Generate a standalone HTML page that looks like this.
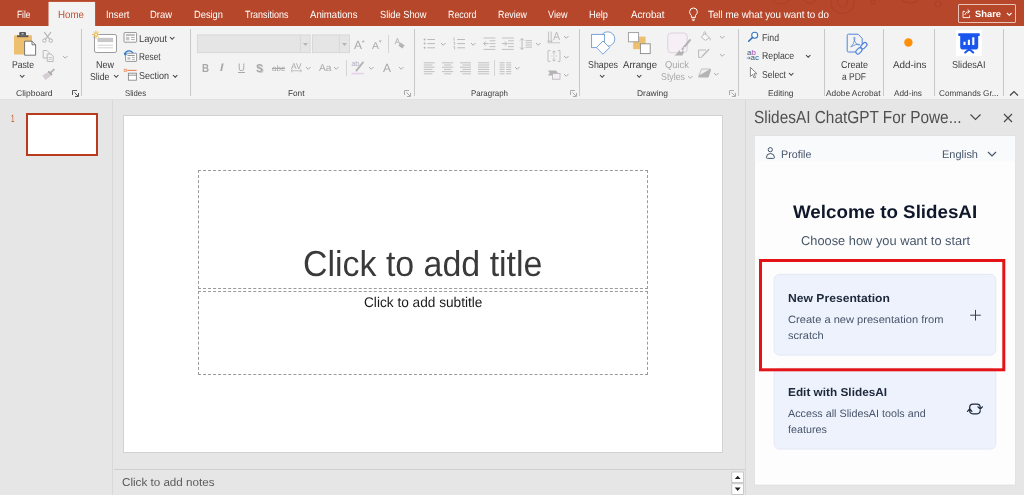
<!DOCTYPE html>
<html><head><meta charset="utf-8"><title>PowerPoint</title>
<style>
html,body{margin:0;padding:0;}
body{width:1024px;height:495px;overflow:hidden;position:relative;background:#e6e6e6;font-family:"Liberation Sans",sans-serif;}
.a{position:absolute;display:block;box-sizing:border-box;}
#txt{position:absolute;left:0;top:0;width:1024px;height:495px;will-change:transform;}
.t{position:absolute;white-space:nowrap;transform-origin:0 50%;text-rendering:geometricPrecision;}
</style></head><body>
<div class="a" style="left:0px;top:0px;width:1024px;height:26px;background:#b7472a;"></div>
<svg class="a" style="left:760px;top:0px" width="264" height="26" viewBox="760 0 264 26" fill="none"><g stroke="#a9412a" stroke-width="1.1" opacity="0.85"><circle cx="842.5" cy="2" r="11.5"/><circle cx="842.5" cy="2" r="5"/><circle cx="781" cy="-6" r="10"/><circle cx="810" cy="-2" r="5.5"/><circle cx="910" cy="-10" r="13"/><circle cx="938" cy="4" r="3"/><circle cx="873" cy="2" r="2"/></g></svg>
<div class="a" style="left:0px;top:26px;width:1024px;height:73px;background:#f3f3f3;"></div>
<div class="a" style="left:0px;top:99px;width:1024px;height:1px;background:#e1e1e1;"></div>
<svg class="a" style="left:47px;top:1px" width="50" height="26" viewBox="47 1 50 26" fill="none"><rect x="48.5" y="1.9" width="46.6" height="25" fill="#f3f3f3"/></svg>
<div class="a" style="left:958px;top:4px;width:58px;height:19px;border:1px solid #e9c3b8;border-radius:1px;"></div>
<svg class="a" style="left:1005.75px;top:12.35px" width="6.5" height="4.3" viewBox="-1 -1 6.5 4.3" fill="none"><path d="M0 0 L2.25 2.3 L4.5 0" stroke="#fff" stroke-width="1.1"/></svg>
<div class="a" style="left:81px;top:29px;width:1px;height:67px;background:#c8c8c8;"></div>
<div class="a" style="left:190px;top:29px;width:1px;height:67px;background:#c8c8c8;"></div>
<div class="a" style="left:414px;top:29px;width:1px;height:67px;background:#c8c8c8;"></div>
<div class="a" style="left:579px;top:29px;width:1px;height:67px;background:#c8c8c8;"></div>
<div class="a" style="left:738px;top:29px;width:1px;height:67px;background:#c8c8c8;"></div>
<div class="a" style="left:824px;top:29px;width:1px;height:67px;background:#c8c8c8;"></div>
<div class="a" style="left:883px;top:29px;width:1px;height:67px;background:#c8c8c8;"></div>
<div class="a" style="left:934px;top:29px;width:1px;height:67px;background:#c8c8c8;"></div>
<div class="a" style="left:1003px;top:29px;width:1px;height:67px;background:#c8c8c8;"></div>
<div class="a" style="left:388px;top:35px;width:1px;height:18px;background:#d4d4d4;"></div>
<div class="a" style="left:346px;top:60px;width:1px;height:16px;background:#d4d4d4;"></div>
<div class="a" style="left:494px;top:60px;width:1px;height:16px;background:#d4d4d4;"></div>
<svg class="a" style="left:72px;top:89.5px" width="7" height="7" viewBox="0 0 7 7" fill="none"><path d="M0.5 5 V0.5 H5" stroke="#555" stroke-width="1"/><path d="M2.5 2.5 L6 6 M6.5 3 V6.5 H3" stroke="#555" stroke-width="1"/></svg>
<svg class="a" style="left:404px;top:89.5px" width="7" height="7" viewBox="0 0 7 7" fill="none"><path d="M0.5 5 V0.5 H5" stroke="#aaa" stroke-width="1"/><path d="M2.5 2.5 L6 6 M6.5 3 V6.5 H3" stroke="#aaa" stroke-width="1"/></svg>
<svg class="a" style="left:570px;top:89.5px" width="7" height="7" viewBox="0 0 7 7" fill="none"><path d="M0.5 5 V0.5 H5" stroke="#aaa" stroke-width="1"/><path d="M2.5 2.5 L6 6 M6.5 3 V6.5 H3" stroke="#aaa" stroke-width="1"/></svg>
<svg class="a" style="left:729px;top:89.5px" width="7" height="7" viewBox="0 0 7 7" fill="none"><path d="M0.5 5 V0.5 H5" stroke="#aaa" stroke-width="1"/><path d="M2.5 2.5 L6 6 M6.5 3 V6.5 H3" stroke="#aaa" stroke-width="1"/></svg>
<svg class="a" style="left:1009px;top:90px;" width="10" height="7" viewBox="0 0 10 7" fill="none"><path d="M1 5.5 L5 1.5 L9 5.5" stroke="#444" stroke-width="1.2"/></svg>
<svg class="a" style="left:18.80px;top:74.35px" width="6.4" height="4.3" viewBox="-1 -1 6.4 4.3" fill="none"><path d="M0 0 L2.2 2.3 L4.4 0" stroke="#3d3d3d" stroke-width="1.05"/></svg>
<svg class="a" style="left:61.75px;top:54.85px" width="6.5" height="4.3" viewBox="-1 -1 6.5 4.3" fill="none"><path d="M0 0 L2.25 2.3 L4.5 0" stroke="#adadad" stroke-width="1.0"/></svg>
<svg class="a" style="left:112.80px;top:74.45px" width="6.4" height="4.3" viewBox="-1 -1 6.4 4.3" fill="none"><path d="M0 0 L2.2 2.3 L4.4 0" stroke="#3d3d3d" stroke-width="1.05"/></svg>
<svg class="a" style="left:168.80px;top:36.35px" width="6.4" height="4.3" viewBox="-1 -1 6.4 4.3" fill="none"><path d="M0 0 L2.2 2.3 L4.4 0" stroke="#3d3d3d" stroke-width="1.05"/></svg>
<svg class="a" style="left:171.80px;top:73.85px" width="6.4" height="4.3" viewBox="-1 -1 6.4 4.3" fill="none"><path d="M0 0 L2.2 2.3 L4.4 0" stroke="#3d3d3d" stroke-width="1.05"/></svg>
<svg class="a" style="left:196px;top:33px" width="155" height="21" viewBox="196 33 155 21" fill="none"><rect x="197.3" y="34.9" width="112.8" height="17.8" fill="#e5e5e5" stroke="#d4d4d4" stroke-width="0.8"/><path d="M300.4 34.9 V52.7" stroke="#d4d4d4" stroke-width="0.8"/><rect x="312.4" y="34.9" width="37" height="17.8" fill="#e5e5e5" stroke="#d4d4d4" stroke-width="0.8"/><path d="M339.4 34.9 V52.7" stroke="#d4d4d4" stroke-width="0.8"/></svg>
<svg class="a" style="left:303px;top:43px;" width="5" height="3" viewBox="0 0 5 3" fill="none"><path d="M0 0 H5 L2.5 3 Z" fill="#b5b5b5"/></svg>
<svg class="a" style="left:342px;top:43px;" width="5" height="3" viewBox="0 0 5 3" fill="none"><path d="M0 0 H5 L2.5 3 Z" fill="#b5b5b5"/></svg>
<svg class="a" style="left:304.75px;top:65.85px" width="6.5" height="4.3" viewBox="-1 -1 6.5 4.3" fill="none"><path d="M0 0 L2.25 2.3 L4.5 0" stroke="#adadad" stroke-width="1.0"/></svg>
<svg class="a" style="left:333.25px;top:65.85px" width="6.5" height="4.3" viewBox="-1 -1 6.5 4.3" fill="none"><path d="M0 0 L2.25 2.3 L4.5 0" stroke="#adadad" stroke-width="1.0"/></svg>
<svg class="a" style="left:367.75px;top:65.85px" width="6.5" height="4.3" viewBox="-1 -1 6.5 4.3" fill="none"><path d="M0 0 L2.25 2.3 L4.5 0" stroke="#adadad" stroke-width="1.0"/></svg>
<svg class="a" style="left:397.75px;top:65.85px" width="6.5" height="4.3" viewBox="-1 -1 6.5 4.3" fill="none"><path d="M0 0 L2.25 2.3 L4.5 0" stroke="#adadad" stroke-width="1.0"/></svg>
<svg class="a" style="left:439.75px;top:41.85px" width="6.5" height="4.3" viewBox="-1 -1 6.5 4.3" fill="none"><path d="M0 0 L2.25 2.3 L4.5 0" stroke="#adadad" stroke-width="1.0"/></svg>
<svg class="a" style="left:469.75px;top:41.85px" width="6.5" height="4.3" viewBox="-1 -1 6.5 4.3" fill="none"><path d="M0 0 L2.25 2.3 L4.5 0" stroke="#adadad" stroke-width="1.0"/></svg>
<svg class="a" style="left:534.75px;top:41.85px" width="6.5" height="4.3" viewBox="-1 -1 6.5 4.3" fill="none"><path d="M0 0 L2.25 2.3 L4.5 0" stroke="#adadad" stroke-width="1.0"/></svg>
<svg class="a" style="left:562.75px;top:35.35px" width="6.5" height="4.3" viewBox="-1 -1 6.5 4.3" fill="none"><path d="M0 0 L2.25 2.3 L4.5 0" stroke="#adadad" stroke-width="1.0"/></svg>
<svg class="a" style="left:562.75px;top:54.85px" width="6.5" height="4.3" viewBox="-1 -1 6.5 4.3" fill="none"><path d="M0 0 L2.25 2.3 L4.5 0" stroke="#adadad" stroke-width="1.0"/></svg>
<svg class="a" style="left:562.75px;top:72.85px" width="6.5" height="4.3" viewBox="-1 -1 6.5 4.3" fill="none"><path d="M0 0 L2.25 2.3 L4.5 0" stroke="#adadad" stroke-width="1.0"/></svg>
<svg class="a" style="left:513.75px;top:65.85px" width="6.5" height="4.3" viewBox="-1 -1 6.5 4.3" fill="none"><path d="M0 0 L2.25 2.3 L4.5 0" stroke="#adadad" stroke-width="1.0"/></svg>
<svg class="a" style="left:599.30px;top:74.35px" width="6.4" height="4.3" viewBox="-1 -1 6.4 4.3" fill="none"><path d="M0 0 L2.2 2.3 L4.4 0" stroke="#3d3d3d" stroke-width="1.05"/></svg>
<svg class="a" style="left:635.80px;top:74.35px" width="6.4" height="4.3" viewBox="-1 -1 6.4 4.3" fill="none"><path d="M0 0 L2.2 2.3 L4.4 0" stroke="#3d3d3d" stroke-width="1.05"/></svg>
<svg class="a" style="left:686.75px;top:74.85px" width="6.5" height="4.3" viewBox="-1 -1 6.5 4.3" fill="none"><path d="M0 0 L2.25 2.3 L4.5 0" stroke="#adadad" stroke-width="1.0"/></svg>
<svg class="a" style="left:718.75px;top:35.35px" width="6.5" height="4.3" viewBox="-1 -1 6.5 4.3" fill="none"><path d="M0 0 L2.25 2.3 L4.5 0" stroke="#adadad" stroke-width="1.0"/></svg>
<svg class="a" style="left:718.75px;top:53.35px" width="6.5" height="4.3" viewBox="-1 -1 6.5 4.3" fill="none"><path d="M0 0 L2.25 2.3 L4.5 0" stroke="#adadad" stroke-width="1.0"/></svg>
<svg class="a" style="left:712.75px;top:71.85px" width="6.5" height="4.3" viewBox="-1 -1 6.5 4.3" fill="none"><path d="M0 0 L2.25 2.3 L4.5 0" stroke="#adadad" stroke-width="1.0"/></svg>
<svg class="a" style="left:804.80px;top:53.85px" width="6.4" height="4.3" viewBox="-1 -1 6.4 4.3" fill="none"><path d="M0 0 L2.2 2.3 L4.4 0" stroke="#3d3d3d" stroke-width="1.05"/></svg>
<svg class="a" style="left:787.80px;top:72.35px" width="6.4" height="4.3" viewBox="-1 -1 6.4 4.3" fill="none"><path d="M0 0 L2.2 2.3 L4.4 0" stroke="#3d3d3d" stroke-width="1.05"/></svg>
<svg class="a" style="left:903px;top:37px" width="11" height="11" viewBox="903 37 11 11" fill="none"><circle cx="908.4" cy="42.45" r="4.2" fill="#ff8f06"/></svg>
<div class="a" style="left:112px;top:100px;width:1px;height:395px;background:#d9d9d9;"></div>
<div class="a" style="left:26px;top:113px;width:72px;height:43px;background:#fff;border:2px solid #b83b1e;"></div>
<div class="a" style="left:123px;top:115px;width:600px;height:338px;background:#fff;border:1px solid #d2d2d2;"></div>
<div class="a" style="left:198px;top:170px;width:450px;height:119px;border:1px dashed #9a9a9a;"></div>
<div class="a" style="left:198px;top:290.5px;width:450px;height:84px;border:1px dashed #9a9a9a;"></div>
<div class="a" style="left:114px;top:469px;width:632px;height:1px;background:#cfcfcf;"></div>
<svg class="a" style="left:730px;top:470px" width="16" height="25" viewBox="730 470 16 25" fill="none"><rect x="731.8" y="472" width="11.8" height="10.6" fill="#fff" stroke="#bdbdbd" stroke-width="0.8"/><rect x="731.8" y="483.8" width="11.8" height="10.8" fill="#fff" stroke="#bdbdbd" stroke-width="0.8"/><path d="M734.8 479 L737.7 475.7 L740.6 479 Z" fill="#222"/><path d="M734.8 487.6 L737.7 490.9 L740.6 487.6 Z" fill="#222"/></svg>
<div class="a" style="left:745px;top:100px;width:1px;height:395px;background:#d8d8d8;"></div>
<svg class="a" style="left:969px;top:113px;" width="13" height="8" viewBox="0 0 13 8" fill="none"><path d="M1.5 1.5 L6.5 6.5 L11.5 1.5" stroke="#444" stroke-width="1.1"/></svg>
<svg class="a" style="left:1002.5px;top:112.5px;" width="10" height="10" viewBox="0 0 10 10" fill="none"><path d="M1 1 L9 9 M9 1 L1 9" stroke="#444" stroke-width="1.1"/></svg>
<svg class="a" style="left:753px;top:134px" width="264" height="353" viewBox="753 134 264 353" fill="none"><rect x="754.4" y="135.7" width="261.1" height="349.3" fill="#fdfdfe" stroke="#dcdcdc" stroke-width="0.7"/><rect x="754.8" y="136.1" width="260.3" height="25.2" fill="#f8fafc"/></svg>
<svg class="a" style="left:986.5px;top:151px;" width="10" height="6" viewBox="0 0 10 6" fill="none"><path d="M1 1 L5 5 L9 1" stroke="#475569" stroke-width="1.2"/></svg>
<svg class="a" style="left:772px;top:272px" width="226" height="180" viewBox="772 272 226 180" fill="none"><rect x="774.1" y="274.3" width="221.7" height="80.8" rx="5.5" fill="#eef2fd" stroke="#e1e7f2" stroke-width="0.9"/><rect x="774.1" y="368.3" width="221.7" height="80.8" rx="5.5" fill="#eef2fd" stroke="#e1e7f2" stroke-width="0.9"/></svg>
<svg class="a" style="left:969px;top:309px" width="13" height="13" viewBox="969 309 13 13" fill="none"><path d="M975.5 309.9 V320.5 M970.2 315.2 H980.8" stroke="#334155" stroke-width="1"/></svg>
<svg class="a" style="left:757px;top:257px" width="251" height="117" viewBox="757 257 251 117" fill="none"><rect x="760.5" y="260.5" width="243.3" height="109.3" stroke="#e41318" stroke-width="3"/></svg>
<svg class="a" style="left:12px;top:30px" width="26" height="28" viewBox="12 30 26 28" fill="none">
<rect x="14" y="35.2" width="18" height="19.3" rx="0.8" fill="#edc06f"/>
<path d="M19.2 35.6 V33 Q19.2 32 20.2 32 H25 Q26 32 26 33 V35.6 Z" fill="#5a5a5a"/><rect x="21.6" y="33.2" width="2" height="1.2" fill="#d8d8d8"/>
<rect x="17" y="35.3" width="11.4" height="1.9" fill="#5a5a5a"/>
<path d="M24.6 41.2 H32 L35.6 44.8 V55.2 H24.6 Z" fill="#fff" stroke="#6a6a6a" stroke-width="0.9"/>
<path d="M32 41.2 V44.8 H35.6" stroke="#6a6a6a" stroke-width="0.9" fill="none"/>
</svg>
<svg class="a" style="left:41px;top:31px" width="14" height="13" viewBox="41 31 14 13" fill="none">
<path d="M44.2 32.2 L50 39.6 M51 32.2 L45.2 39.6" stroke="#b4b4b4" stroke-width="1.1"/>
<circle cx="44.4" cy="40.6" r="1.7" stroke="#b4b4b4" stroke-width="1"/>
<circle cx="50.8" cy="40.6" r="1.7" stroke="#b4b4b4" stroke-width="1"/>
</svg>
<svg class="a" style="left:41px;top:49px" width="14" height="14" viewBox="41 49 14 14" fill="none">
<path d="M43.2 50.5 H47 L49 52.5 V58 H43.2 Z" stroke="#b4b4b4" stroke-width="0.9" fill="#f3f3f3"/>
<path d="M47.2 54 H51 L53.2 56.2 V61.5 H47.2 Z" stroke="#b4b4b4" stroke-width="0.9" fill="#f3f3f3"/>
<path d="M48.6 57.5 H51.8 M48.6 59.3 H51.8" stroke="#b4b4b4" stroke-width="0.7"/>
</svg>
<svg class="a" style="left:41px;top:68px" width="15" height="13" viewBox="41 68 15 13" fill="none">
<path d="M47.6 72.2 L51.2 75.8 L45.4 80 L42.4 75.6 Z" fill="#d4cdd4"/>
<path d="M48.4 71.4 L52 75" stroke="#a0a0a0" stroke-width="1.7"/>
<path d="M53.8 69.6 L51.2 72.2" stroke="#b4b4b4" stroke-width="1.9" stroke-linecap="round"/>
</svg>
<svg class="a" style="left:90px;top:29px" width="29" height="25" viewBox="90 29 29 25" fill="none">
<rect x="94.5" y="34.5" width="22" height="18" rx="1.6" fill="#fff" stroke="#9c9c9c" stroke-width="1"/>
<rect x="97.5" y="37.8" width="15.6" height="4.3" fill="#c8c8c8"/>
<path d="M97.5 45.2 H113 M97.5 47.8 H113" stroke="#c8c8c8" stroke-width="0.8"/>
<g stroke="#e9b23e" stroke-width="0.9"><path d="M96 30.6 V38.6 M92 34.6 H100 M93.2 31.8 L98.8 37.4 M98.8 31.8 L93.2 37.4"/></g>
<circle cx="96" cy="34.6" r="1.5" fill="#f3f3f3" stroke="#e9b23e" stroke-width="0.8"/>
</svg>
<svg class="a" style="left:123px;top:31px" width="15" height="13" viewBox="123 31 15 13" fill="none">
<rect x="124" y="32.6" width="12.6" height="9.6" rx="0.6" fill="#fff" stroke="#8a8a8a" stroke-width="0.9"/>
<path d="M125.8 35 H134.8" stroke="#8a8a8a" stroke-width="1.1"/>
<rect x="125.8" y="36.8" width="3.6" height="3.6" fill="#c6c6c6"/>
<path d="M131 37.4 H134.8 M131 39.6 H134.8" stroke="#9a9a9a" stroke-width="0.8"/>
</svg>
<svg class="a" style="left:123px;top:49px" width="15" height="14" viewBox="123 49 15 14" fill="none">
<rect x="125.6" y="53.2" width="11" height="8.2" rx="0.6" fill="#fff" stroke="#8a8a8a" stroke-width="0.9"/>
<path d="M127.4 55.4 H134.8" stroke="#8a8a8a" stroke-width="1"/>
<rect x="127.4" y="57" width="3" height="2.8" fill="#c6c6c6"/>
<path d="M132 57.4 H134.8 M132 59.4 H134.8" stroke="#9a9a9a" stroke-width="0.8"/>
<path d="M124.8 54.6 Q125.4 50.6 129.6 50.9 Q132 51.2 132.8 53" stroke="#2b79d0" stroke-width="1.3" fill="none"/>
<path d="M123.6 52.6 L124.7 55.6 L127.4 54.2 Z" fill="#2b79d0"/>
</svg>
<svg class="a" style="left:123px;top:68px" width="15" height="14" viewBox="123 68 15 14" fill="none">
<rect x="124.2" y="69.2" width="2.4" height="2.4" fill="#fbe3d2" stroke="#e8835a" stroke-width="0.7"/>
<path d="M127.4 70.4 H136.6" stroke="#e8835a" stroke-width="1.1"/>
<rect x="128.4" y="73.2" width="8" height="7" fill="#fff" stroke="#8a8a8a" stroke-width="0.9"/>
<path d="M128.4 75.2 H136.4" stroke="#7a7a7a" stroke-width="0.8"/>
</svg>
<svg class="a" style="left:361px;top:39px" width="5" height="4" viewBox="361 39 5 4" fill="none"><path d="M361.6 42.2 L363.2 40 L364.8 42.2 Z" fill="#b4b4b4"/></svg>
<svg class="a" style="left:378px;top:40px" width="5" height="4" viewBox="378 40 5 4" fill="none"><path d="M378.6 40.6 L380.2 42.8 L381.8 40.6 Z" fill="#b4b4b4"/></svg>
<svg class="a" style="left:393px;top:37px" width="13" height="13" viewBox="393 37 13 13" fill="none">
<path d="M395 44.2 L397.4 38.2 L399.8 44.2 M395.9 42.2 H398.9" stroke="#b4b4b4" stroke-width="0.9"/>
<path d="M400.6 42.4 L404.6 45.6 L402.4 48.6 L398.4 45.4 Z" fill="#b4b4b4"/>
</svg>
<svg class="a" style="left:290px;top:69px" width="13" height="4" viewBox="290 69 13 4" fill="none"><path d="M291 70.8 H301.6 M292.6 69.4 L291 70.8 L292.6 72.2 M300 69.4 L301.6 70.8 L300 72.2" stroke="#b4b4b4" stroke-width="0.8"/></svg>
<svg class="a" style="left:351px;top:60px" width="14" height="16" viewBox="351 60 14 16" fill="none">
<text x="351.4" y="66.2" font-size="7" fill="#b4b4b4" font-family="Liberation Sans, sans-serif">ab</text>
<path d="M363 62.4 L356.4 70.6" stroke="#b4b4b4" stroke-width="1.9" stroke-linecap="round"/>
<path d="M351.4 73.6 H364" stroke="#e6d3ea" stroke-width="1.6"/>
</svg>
<svg class="a" style="left:422px;top:36px" width="15" height="14" viewBox="422 36 15 14" fill="none"><circle cx="424.6" cy="39.5" r="1" fill="#b4b4b4"/><circle cx="424.6" cy="43.6" r="1" fill="#b4b4b4"/><circle cx="424.6" cy="47.8" r="1" fill="#b4b4b4"/><path d="M427.4 39.5 H435" stroke="#b4b4b4" stroke-width="0.9"/><path d="M427.4 43.6 H435" stroke="#b4b4b4" stroke-width="0.9"/><path d="M427.4 47.8 H435" stroke="#b4b4b4" stroke-width="0.9"/></svg>
<svg class="a" style="left:451px;top:36px" width="15" height="14" viewBox="451 36 15 14" fill="none"><path d="M454 37.6 V40.8 M453.4 42.4 H454.6 V45 M453.4 46.6 H454.6 V49.4" stroke="#b4b4b4" stroke-width="0.8"/><path d="M457.2 39.5 H465" stroke="#b4b4b4" stroke-width="0.9"/><path d="M457.2 43.6 H465" stroke="#b4b4b4" stroke-width="0.9"/><path d="M457.2 47.8 H465" stroke="#b4b4b4" stroke-width="0.9"/></svg>
<svg class="a" style="left:482px;top:36px" width="15" height="15" viewBox="482 36 15 15" fill="none"><path d="M483.6 38 H495.4" stroke="#b4b4b4" stroke-width="0.8"/><path d="M483.6 49.4 H495.4" stroke="#b4b4b4" stroke-width="0.8"/><path d="M489.6 40.8 H495.4" stroke="#b4b4b4" stroke-width="0.8"/><path d="M489.6 43.6 H495.4" stroke="#b4b4b4" stroke-width="0.8"/><path d="M489.6 46.6 H495.4" stroke="#b4b4b4" stroke-width="0.8"/><path d="M483.8 43.6 H488.6 M485.8 41.4 L483.6 43.6 L485.8 45.8" stroke="#b4b4b4" stroke-width="0.9"/></svg>
<svg class="a" style="left:500px;top:36px" width="15" height="15" viewBox="500 36 15 15" fill="none"><path d="M502 38 H513.8" stroke="#b4b4b4" stroke-width="0.8"/><path d="M502 49.4 H513.8" stroke="#b4b4b4" stroke-width="0.8"/><path d="M508 40.8 H513.8" stroke="#b4b4b4" stroke-width="0.8"/><path d="M508 43.6 H513.8" stroke="#b4b4b4" stroke-width="0.8"/><path d="M508 46.6 H513.8" stroke="#b4b4b4" stroke-width="0.8"/><path d="M502 43.6 H507 M504.8 41.4 L507 43.6 L504.8 45.8" stroke="#b4b4b4" stroke-width="0.9"/></svg>
<svg class="a" style="left:518px;top:37px" width="15" height="14" viewBox="518 37 15 14" fill="none"><path d="M522 38.6 V49.4 M520 40.6 L522 38.4 L524 40.6 M520 47.4 L522 49.6 L524 47.4" stroke="#b4b4b4" stroke-width="0.9"/><path d="M525.6 40.6 H532" stroke="#b4b4b4" stroke-width="0.8"/><path d="M525.6 42.8 H532" stroke="#b4b4b4" stroke-width="0.8"/><path d="M525.6 45 H532" stroke="#b4b4b4" stroke-width="0.8"/><path d="M525.6 47.2 H532" stroke="#b4b4b4" stroke-width="0.8"/></svg>
<svg class="a" style="left:422px;top:61px" width="14" height="14" viewBox="422 61 14 14" fill="none"><path d="M423.8 62.8 H434.6" stroke="#b4b4b4" stroke-width="0.8"/><path d="M423.8 65 H432.4" stroke="#b4b4b4" stroke-width="0.8"/><path d="M423.8 67.2 H434.6" stroke="#b4b4b4" stroke-width="0.8"/><path d="M423.8 69.4 H432.4" stroke="#b4b4b4" stroke-width="0.8"/><path d="M423.8 71.6 H434.6" stroke="#b4b4b4" stroke-width="0.8"/><path d="M423.8 73.8 H432.4" stroke="#b4b4b4" stroke-width="0.8"/></svg>
<svg class="a" style="left:440px;top:61px" width="14" height="14" viewBox="440 61 14 14" fill="none"><path d="M442 62.8 H453.2" stroke="#b4b4b4" stroke-width="0.8"/><path d="M444 65 H451.2" stroke="#b4b4b4" stroke-width="0.8"/><path d="M442 67.2 H453.2" stroke="#b4b4b4" stroke-width="0.8"/><path d="M444 69.4 H451.2" stroke="#b4b4b4" stroke-width="0.8"/><path d="M442 71.6 H453.2" stroke="#b4b4b4" stroke-width="0.8"/><path d="M444 73.8 H451.2" stroke="#b4b4b4" stroke-width="0.8"/></svg>
<svg class="a" style="left:458px;top:61px" width="14" height="14" viewBox="458 61 14 14" fill="none"><path d="M460 62.8 H471" stroke="#b4b4b4" stroke-width="0.8"/><path d="M462.4 65 H471" stroke="#b4b4b4" stroke-width="0.8"/><path d="M460 67.2 H471" stroke="#b4b4b4" stroke-width="0.8"/><path d="M462.4 69.4 H471" stroke="#b4b4b4" stroke-width="0.8"/><path d="M460 71.6 H471" stroke="#b4b4b4" stroke-width="0.8"/><path d="M462.4 73.8 H471" stroke="#b4b4b4" stroke-width="0.8"/></svg>
<svg class="a" style="left:476px;top:61px" width="14" height="14" viewBox="476 61 14 14" fill="none"><path d="M478 62.8 H489.2" stroke="#b4b4b4" stroke-width="0.8"/><path d="M478 65 H489.2" stroke="#b4b4b4" stroke-width="0.8"/><path d="M478 67.2 H489.2" stroke="#b4b4b4" stroke-width="0.8"/><path d="M478 69.4 H489.2" stroke="#b4b4b4" stroke-width="0.8"/><path d="M478 71.6 H489.2" stroke="#b4b4b4" stroke-width="0.8"/><path d="M478 73.8 H489.2" stroke="#b4b4b4" stroke-width="0.8"/></svg>
<svg class="a" style="left:498px;top:61px" width="14" height="14" viewBox="498 61 14 14" fill="none"><path d="M499.6 62.8 H504.6" stroke="#b4b4b4" stroke-width="0.8"/><path d="M499.6 65 H504.6" stroke="#b4b4b4" stroke-width="0.8"/><path d="M499.6 67.2 H504.6" stroke="#b4b4b4" stroke-width="0.8"/><path d="M499.6 69.4 H504.6" stroke="#b4b4b4" stroke-width="0.8"/><path d="M499.6 71.6 H504.6" stroke="#b4b4b4" stroke-width="0.8"/><path d="M499.6 73.8 H504.6" stroke="#b4b4b4" stroke-width="0.8"/><path d="M506.2 62.8 H511.2" stroke="#b4b4b4" stroke-width="0.8"/><path d="M506.2 65 H511.2" stroke="#b4b4b4" stroke-width="0.8"/><path d="M506.2 67.2 H511.2" stroke="#b4b4b4" stroke-width="0.8"/><path d="M506.2 69.4 H511.2" stroke="#b4b4b4" stroke-width="0.8"/><path d="M506.2 71.6 H511.2" stroke="#b4b4b4" stroke-width="0.8"/><path d="M506.2 73.8 H511.2" stroke="#b4b4b4" stroke-width="0.8"/></svg>
<svg class="a" style="left:546px;top:30px" width="16" height="14" viewBox="546 30 16 14" fill="none"><path d="M548.6 31.6 V42 M551.2 31.6 V42 M547.4 40.6 L548.6 42.2 L549.8 40.6 M550 40.6 L551.2 42.2 L552.4 40.6" stroke="#b4b4b4" stroke-width="0.8"/><path d="M553.6 40 L556.6 32 L559.6 40 M554.8 37.2 H558.4" stroke="#b4b4b4" stroke-width="0.9"/><path d="M547.6 42.8 H560.2" stroke="#b4b4b4" stroke-width="0.7"/></svg>
<svg class="a" style="left:546px;top:49px" width="16" height="14" viewBox="546 49 16 14" fill="none"><path d="M550.4 50.6 H548 V61.4 H550.4 M557.6 50.6 H560 V61.4 H557.6" stroke="#b4b4b4" stroke-width="0.8"/><path d="M554 50.8 V54.6 M552.4 52.4 L554 50.8 L555.6 52.4 M554 61.2 V57.4 M552.4 59.6 L554 61.2 L555.6 59.6" stroke="#b4b4b4" stroke-width="0.8"/><path d="M550.6 56 H557.4" stroke="#e6d3ea" stroke-width="1"/></svg>
<svg class="a" style="left:546px;top:69px" width="16" height="12" viewBox="546 69 16 12" fill="none"><path d="M547.8 70.4 H556 L558 73 L556 75.6 H547.8 L549.8 73 Z" fill="#b4b4b4"/><rect x="552.4" y="73.4" width="7.6" height="5.8" fill="#f5eef6" stroke="#b4b4b4" stroke-width="0.8"/></svg>
<svg class="a" style="left:589px;top:29px" width="28" height="28" viewBox="589 29 28 28" fill="none">
<circle cx="607.6" cy="39" r="7.2" fill="#fff" stroke="#6d9bd3" stroke-width="0.9"/>
<rect x="591.6" y="34.4" width="13" height="13.2" fill="#fff" stroke="#6d9bd3" stroke-width="0.9"/>
<path d="M603 41 L609.6 47.6 L603 54.2 L596.4 47.6 Z" fill="#fff" stroke="#6d9bd3" stroke-width="0.9"/>
</svg>
<svg class="a" style="left:626px;top:30px" width="26" height="26" viewBox="626 30 26 26" fill="none">
<rect x="633.2" y="36.6" width="12.4" height="12.6" fill="#edc06f"/>
<rect x="628.4" y="32.6" width="10.2" height="9.2" fill="#fff" stroke="#9a9a9a" stroke-width="0.9"/>
<rect x="640.4" y="43.8" width="9.8" height="9.8" fill="#fff" stroke="#8a8a8a" stroke-width="0.9"/>
</svg>
<svg class="a" style="left:665px;top:30px" width="27" height="28" viewBox="665 30 27 28" fill="none">
<rect x="667.8" y="33" width="19.4" height="19.8" rx="3.4" fill="#f6f0f6" stroke="#d8d0d8" stroke-width="0.9"/>
<path d="M690 40 L682.6 49" stroke="#b4b4b4" stroke-width="2" stroke-linecap="round"/>
<path d="M681.2 49.2 Q679 49.6 677.4 52.8 Q675.6 55.4 673.6 55.6 H682.4 Q684.2 53 683.6 51 Z" fill="#b4b4b4"/>
<circle cx="681" cy="50.6" r="1.4" fill="#f3f3f3"/><circle cx="684.6" cy="48" r="1" fill="#f3f3f3"/>
</svg>
<svg class="a" style="left:699px;top:30px" width="13" height="12" viewBox="699 30 13 12" fill="none"><path d="M705 33.6 L709.4 37.6 L705.4 40.4 L701.2 37 Z" stroke="#b4b4b4" stroke-width="0.9" fill="#f8f8f8"/><path d="M703.8 35 V32.4 Q704.6 31 705.8 32.4 V34.4" stroke="#b4b4b4" stroke-width="0.8"/><path d="M709.6 37.6 Q710.8 39.4 710 40.4" stroke="#b4b4b4" stroke-width="0.9"/></svg>
<svg class="a" style="left:697px;top:48px" width="15" height="11" viewBox="697 48 15 11" fill="none"><path d="M706 50 H698.6 V57.4 H702" stroke="#b4b4b4" stroke-width="0.9"/><path d="M709.6 49.6 L703 56.6 L701.4 57.6 L702 55.8 L708.6 48.8 Z" fill="#b4b4b4"/></svg>
<svg class="a" style="left:697px;top:67px" width="15" height="12" viewBox="697 67 15 12" fill="none"><path d="M701.6 69 H710.2 L708 75.4 H699 Z" fill="#f4eef4" stroke="#b4b4b4" stroke-width="0.8"/><path d="M699 75.4 V77 H708 L710.2 70.8 V69" stroke="#b4b4b4" stroke-width="1.2" fill="#b4b4b4"/></svg>
<svg class="a" style="left:746px;top:30px" width="15" height="13" viewBox="746 30 15 13" fill="none"><circle cx="754.7" cy="35.2" r="3" fill="#fafcff" stroke="#3576c0" stroke-width="1.05"/><path d="M752.5 37.5 L748.7 41.3" stroke="#2b6cb8" stroke-width="1.5" stroke-linecap="round"/></svg>
<svg class="a" style="left:746px;top:48px" width="15" height="14" viewBox="746 48 15 14" fill="none">
<text x="747" y="54.6" font-size="7.8" fill="#555" font-family="Liberation Sans, sans-serif">a</text>
<text x="751.4" y="54.6" font-size="7.8" fill="#9b4fb8" font-family="Liberation Sans, sans-serif">b</text>
<text x="750.6" y="60.2" font-size="7.8" fill="#555" font-family="Liberation Sans, sans-serif">ac</text>
<path d="M746.8 58 H750 M748.8 56.8 L750.2 58 L748.8 59.2" stroke="#2b79d0" stroke-width="0.8"/>
</svg>
<svg class="a" style="left:748px;top:66px" width="11" height="14" viewBox="748 66 11 14" fill="none"><path d="M750.4 67.4 V76.4 L752.6 74.4 L754.2 78 L755.6 77.4 L754 73.8 H757 Z" fill="#fff" stroke="#6a6a6a" stroke-width="0.8" stroke-linejoin="round"/></svg>
<svg class="a" style="left:845px;top:32px" width="24" height="25" viewBox="845 32 24 25" fill="none">
<path d="M848.4 34.2 H858 L862.2 38.4 V44 M855 52 H848.4 Q847.2 52 847.2 50.8 V35.4 Q847.2 34.2 848.4 34.2" stroke="#4f84dc" stroke-width="1"/>
<path d="M850.8 47 Q853.8 44.6 855 38.6 Q855.2 37 854.2 37.2 Q853.2 37.6 854.6 41 Q856 44.2 859 45.2 Q860 45.2 859.4 44.4 Q856.4 43.6 850.8 47 Z" stroke="#4f84dc" stroke-width="0.8"/>
<g stroke="#4f84dc" stroke-width="1.2"><rect x="860.4" y="43.6" width="7" height="4.2" rx="2.1" transform="rotate(-45 863.9 45.7)"/><rect x="855.4" y="48.8" width="7" height="4.2" rx="2.1" transform="rotate(-45 858.9 50.9)"/></g>
</svg>
<svg class="a" style="left:955px;top:29px" width="28" height="28" viewBox="955 29 28 28" fill="none">
<rect x="956" y="30" width="25.7" height="26.1" fill="#fff"/>
<rect x="958.2" y="33.2" width="21.6" height="2.7" rx="0.7" fill="#1a56ee"/>
<path d="M960.2 35.6 H978.2 V46.4 Q978.2 49.6 975 49.6 H963.4 Q960.2 49.6 960.2 46.4 Z" fill="#1a56ee"/>
<path d="M969.2 49.2 L965.2 52.5 M969.2 49.2 L973.2 52.5" stroke="#1a56ee" stroke-width="2.1" stroke-linecap="round"/>
<path d="M964.5 41.7 V45 M968.9 39.7 V45 M973.3 37.2 V45" stroke="#fff" stroke-width="2.1"/>
</svg>
<svg class="a" style="left:961px;top:8px" width="11" height="11" viewBox="961 8 11 11" fill="none"><path d="M965 11.4 H963 V17.6 H969.6 V15.4" stroke="#fff" stroke-width="0.9"/><path d="M964.8 15 Q965.4 11.6 969.2 11.4 M967.6 9.4 L969.8 11.4 L967.6 13.4" stroke="#fff" stroke-width="0.9"/></svg>
<svg class="a" style="left:688px;top:6px" width="11" height="16" viewBox="688 6 11 16" fill="none"><path d="M691.4 15.6 Q689.4 13.6 689.6 11.6 Q690 8 693.4 8 Q697 8 697.4 11.6 Q697.4 13.6 695.4 15.6 V17.4 H691.4 Z" stroke="#fff" stroke-width="1"/><path d="M691.8 19.2 H695 M692.4 20.6 H694.4" stroke="#fff" stroke-width="0.9"/></svg>
<svg class="a" style="left:764px;top:146px" width="13" height="14" viewBox="764 146 13 14" fill="none"><circle cx="770.3" cy="149.7" r="2.1" stroke="#475569" stroke-width="1"/><path d="M766.4 157.4 Q766.6 153.5 770.4 153.5 Q774.3 153.5 774.5 157.4 Q774.5 158.4 773.4 158.4 H767.5 Q766.4 158.4 766.4 157.4 Z" stroke="#475569" stroke-width="1"/></svg>
<svg class="a" style="left:965px;top:401px" width="20" height="16" viewBox="965 401 20 16" fill="none">
<path d="M969.7 408.6 V407.4 Q969.7 404.2 972.9 404.2 H977 Q980.2 404.2 980.2 407.4 V408.6 M978 406.8 L980.2 409.2 L982.4 406.8" stroke="#1e293b" stroke-width="1.25" stroke-linecap="round" stroke-linejoin="round"/>
<path d="M980.2 410.6 Q980.2 413.8 977 413.8 H972.9 Q969.7 413.8 969.7 410.6 V409.6 M967.5 411.4 L969.7 409 L971.9 411.4" stroke="#1e293b" stroke-width="1.25" stroke-linecap="round" stroke-linejoin="round"/>
</svg>
<div id="txt">
<div class="t" style="left:17.00px;top:9px;font-size:10.4px;line-height:14px;color:#fff;transform:scaleX(0.8056);">File</div>
<div class="t" style="left:58.00px;top:9px;font-size:10.4px;line-height:14px;color:#c0502f;transform:scaleX(0.9373);">Home</div>
<div class="t" style="left:105.50px;top:9px;font-size:10.4px;line-height:14px;color:#fff;transform:scaleX(0.9036);">Insert</div>
<div class="t" style="left:150.00px;top:9px;font-size:10.4px;line-height:14px;color:#fff;transform:scaleX(0.9066);">Draw</div>
<div class="t" style="left:194.00px;top:9px;font-size:10.4px;line-height:14px;color:#fff;transform:scaleX(0.8958);">Design</div>
<div class="t" style="left:244.50px;top:9px;font-size:10.4px;line-height:14px;color:#fff;transform:scaleX(0.8618);">Transitions</div>
<div class="t" style="left:310.00px;top:9px;font-size:10.4px;line-height:14px;color:#fff;transform:scaleX(0.9233);">Animations</div>
<div class="t" style="left:379.50px;top:9px;font-size:10.4px;line-height:14px;color:#fff;transform:scaleX(0.8937);">Slide Show</div>
<div class="t" style="left:447.50px;top:9px;font-size:10.4px;line-height:14px;color:#fff;transform:scaleX(0.8501);">Record</div>
<div class="t" style="left:498.00px;top:9px;font-size:10.4px;line-height:14px;color:#fff;transform:scaleX(0.8505);">Review</div>
<div class="t" style="left:548.00px;top:9px;font-size:10.4px;line-height:14px;color:#fff;transform:scaleX(0.8723);">View</div>
<div class="t" style="left:589.00px;top:9px;font-size:10.4px;line-height:14px;color:#fff;transform:scaleX(0.8883);">Help</div>
<div class="t" style="left:630.50px;top:9px;font-size:10.4px;line-height:14px;color:#fff;transform:scaleX(0.9347);">Acrobat</div>
<div class="t" style="left:708.00px;top:9px;font-size:10.4px;line-height:14px;color:#fff;transform:scaleX(0.9429);">Tell me what you want to do</div>
<div class="t" style="left:975.00px;top:8px;font-size:9.3px;line-height:12px;color:#fff;transform:scaleX(1.0059);font-weight:bold;">Share</div>
<div class="t" style="left:15.50px;top:88px;font-size:8.3px;line-height:11px;color:#3d3d3d;transform:scaleX(1.0275);">Clipboard</div>
<div class="t" style="left:124.50px;top:88px;font-size:8.3px;line-height:11px;color:#3d3d3d;transform:scaleX(0.9290);">Slides</div>
<div class="t" style="left:287.50px;top:88px;font-size:8.3px;line-height:11px;color:#3d3d3d;transform:scaleX(0.9936);">Font</div>
<div class="t" style="left:471.00px;top:88px;font-size:8.3px;line-height:11px;color:#3d3d3d;transform:scaleX(0.9547);">Paragraph</div>
<div class="t" style="left:637.00px;top:88px;font-size:8.3px;line-height:11px;color:#3d3d3d;transform:scaleX(1.0183);">Drawing</div>
<div class="t" style="left:767.50px;top:88px;font-size:8.3px;line-height:11px;color:#3d3d3d;transform:scaleX(1.0048);">Editing</div>
<div class="t" style="left:826.00px;top:88px;font-size:8.3px;line-height:11px;color:#3d3d3d;transform:scaleX(1.0009);">Adobe Acrobat</div>
<div class="t" style="left:894.00px;top:88px;font-size:8.3px;line-height:11px;color:#3d3d3d;transform:scaleX(0.9950);">Add-ins</div>
<div class="t" style="left:938.50px;top:88px;font-size:8.3px;line-height:11px;color:#3d3d3d;transform:scaleX(0.9848);">Commands Gr...</div>
<div class="t" style="left:12.00px;top:59px;font-size:10.0px;line-height:13px;color:#3d3d3d;transform:scaleX(0.8604);">Paste</div>
<div class="t" style="left:96.00px;top:59px;font-size:10.0px;line-height:13px;color:#3d3d3d;transform:scaleX(0.8998);">New</div>
<div class="t" style="left:90.00px;top:71px;font-size:10.0px;line-height:13px;color:#3d3d3d;transform:scaleX(0.8770);">Slide</div>
<div class="t" style="left:139.00px;top:33px;font-size:10.0px;line-height:13px;color:#3d3d3d;transform:scaleX(0.9327);">Layout</div>
<div class="t" style="left:139.00px;top:51px;font-size:10.0px;line-height:13px;color:#3d3d3d;transform:scaleX(0.8231);">Reset</div>
<div class="t" style="left:139.00px;top:70px;font-size:10.0px;line-height:13px;color:#3d3d3d;transform:scaleX(0.8995);">Section</div>
<div class="t" style="left:354.00px;top:37px;font-size:12px;line-height:16px;color:#a8a8a8;transform:scaleX(0.9995);">A</div>
<div class="t" style="left:372.00px;top:40px;font-size:10.0px;line-height:13px;color:#a8a8a8;transform:scaleX(1.0494);">A</div>
<div class="t" style="left:202.00px;top:62px;font-size:11.5px;line-height:15px;color:#a8a8a8;transform:scaleX(0.8428);font-weight:bold;">B</div>
<div class="t" style="left:220.30px;top:61px;font-size:11px;line-height:14px;color:#a8a8a8;transform:scaleX(1.1126);font-weight:bold;font-style:italic;font-family:"Liberation Serif",serif;">I</div>
<div class="t" style="left:238.00px;top:61px;font-size:11px;line-height:14px;color:#a8a8a8;transform:scaleX(0.8812);text-decoration:underline;">U</div>
<div class="t" style="left:256.00px;top:62px;font-size:11.5px;line-height:15px;color:#a8a8a8;transform:scaleX(0.9125);font-weight:bold;text-shadow:1px 1px 0 #d0d0d0;">S</div>
<div class="t" style="left:271.50px;top:64px;font-size:8px;line-height:10px;color:#a8a8a8;transform:scaleX(1.0079);text-decoration:line-through;">abc</div>
<div class="t" style="left:291.00px;top:61px;font-size:8.4px;line-height:11px;color:#a8a8a8;transform:scaleX(0.9922);">AV</div>
<div class="t" style="left:319.00px;top:62px;font-size:10.0px;line-height:13px;color:#a8a8a8;transform:scaleX(1.0220);">Aa</div>
<div class="t" style="left:383.00px;top:60px;font-size:12px;line-height:16px;color:#a8a8a8;transform:scaleX(0.9995);">A</div>
<div class="t" style="left:588.00px;top:59px;font-size:10.0px;line-height:13px;color:#3d3d3d;transform:scaleX(0.8846);">Shapes</div>
<div class="t" style="left:623.00px;top:59px;font-size:10.0px;line-height:13px;color:#3d3d3d;transform:scaleX(0.9558);">Arrange</div>
<div class="t" style="left:665.00px;top:59px;font-size:10.0px;line-height:13px;color:#a8a8a8;transform:scaleX(0.9389);">Quick</div>
<div class="t" style="left:661.00px;top:71px;font-size:10.0px;line-height:13px;color:#a8a8a8;transform:scaleX(0.8813);">Styles</div>
<div class="t" style="left:762.00px;top:32px;font-size:10.0px;line-height:13px;color:#3d3d3d;transform:scaleX(0.8740);">Find</div>
<div class="t" style="left:762.00px;top:50px;font-size:10.0px;line-height:13px;color:#3d3d3d;transform:scaleX(0.8722);">Replace</div>
<div class="t" style="left:762.00px;top:69px;font-size:10.0px;line-height:13px;color:#3d3d3d;transform:scaleX(0.8636);">Select</div>
<div class="t" style="left:840.50px;top:59px;font-size:10.0px;line-height:13px;color:#3d3d3d;transform:scaleX(0.8996);">Create</div>
<div class="t" style="left:842.00px;top:71px;font-size:10.0px;line-height:13px;color:#3d3d3d;transform:scaleX(0.8469);">a PDF</div>
<div class="t" style="left:892.50px;top:59px;font-size:10.0px;line-height:13px;color:#3d3d3d;transform:scaleX(0.9881);">Add-ins</div>
<div class="t" style="left:952.00px;top:59px;font-size:10.0px;line-height:13px;color:#3d3d3d;transform:scaleX(0.9132);">SlidesAI</div>
<div class="t" style="left:11.00px;top:112px;font-size:10.5px;line-height:14px;color:#c8501e;transform:scaleX(0.5994);">1</div>
<div class="t" style="left:303.40px;top:240px;font-size:36px;line-height:47px;color:#3a3a3a;transform:scaleX(0.9422);">Click to add title</div>
<div class="t" style="left:363.50px;top:293px;font-size:14.1px;line-height:18px;color:#1a1a1a;transform:scaleX(0.9693);">Click to add subtitle</div>
<div class="t" style="left:122.20px;top:476px;font-size:11.4px;line-height:15px;color:#5a5a5a;transform:scaleX(1.0220);">Click to add notes</div>
<div class="t" style="left:754.40px;top:106px;font-size:17.4px;line-height:23px;color:#505050;transform:scaleX(0.8847);">SlidesAI ChatGPT For Powe...</div>
<div class="t" style="left:780.80px;top:148px;font-size:10.9px;line-height:14px;color:#475569;transform:scaleX(0.9872);">Profile</div>
<div class="t" style="left:942.00px;top:148px;font-size:10.9px;line-height:14px;color:#475569;transform:scaleX(1.0070);">English</div>
<div class="t" style="left:792.70px;top:200px;font-size:18.3px;line-height:24px;color:#0f172a;transform:scaleX(1.0259);font-weight:bold;">Welcome to SlidesAI</div>
<div class="t" style="left:800.50px;top:232px;font-size:12.8px;line-height:17px;color:#475569;transform:scaleX(1.0029);">Choose how you want to start</div>
<div class="t" style="left:787.80px;top:292px;font-size:11.5px;line-height:15px;color:#1e293b;transform:scaleX(1.0560);font-weight:bold;">New Presentation</div>
<div class="t" style="left:787.50px;top:313px;font-size:10.6px;line-height:14px;color:#475569;transform:scaleX(1.0474);">Create a new presentation from</div>
<div class="t" style="left:787.50px;top:329px;font-size:10.6px;line-height:14px;color:#475569;transform:scaleX(1.0474);">scratch</div>
<div class="t" style="left:787.80px;top:386px;font-size:11.5px;line-height:15px;color:#1e293b;transform:scaleX(1.0272);font-weight:bold;">Edit with SlidesAI</div>
<div class="t" style="left:787.50px;top:407px;font-size:10.6px;line-height:14px;color:#475569;transform:scaleX(1.0169);">Access all SlidesAI tools and</div>
<div class="t" style="left:787.50px;top:423px;font-size:10.6px;line-height:14px;color:#475569;transform:scaleX(1.0169);">features</div>
</div>
</body></html>
